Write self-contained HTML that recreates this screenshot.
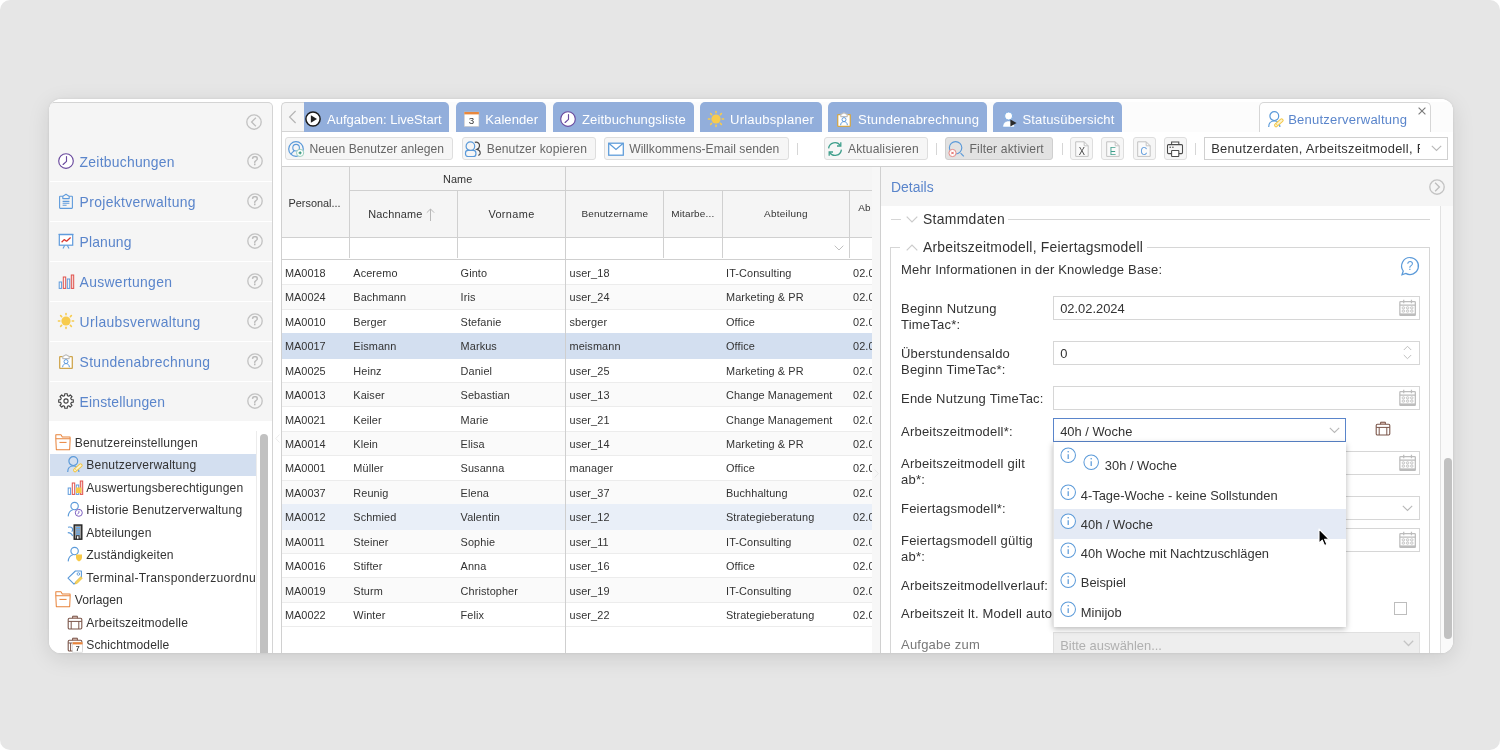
<!DOCTYPE html>
<html lang="de">
<head>
<meta charset="utf-8">
<title>Benutzerverwaltung</title>
<style>
*{box-sizing:border-box;margin:0;padding:0}
html,body{width:1500px;height:750px;overflow:hidden}
body{background:#fff;font-family:"Liberation Sans",Arial,sans-serif;color:#333;position:relative}
#bg{position:absolute;left:0;top:0;width:1500px;height:750px;border-radius:10px;background:#e6e6e6}
#shadow{position:absolute;left:49px;top:99px;width:1404px;height:554px;border-radius:12px;background:#fff;box-shadow:0 5px 22px rgba(0,0,0,.115),0 0 3px rgba(0,0,0,.08)}
#card{position:absolute;left:49px;top:99px;width:1404px;height:554px;border-radius:12px;background:#fff;overflow:hidden}
#pg{position:absolute;left:-49px;top:-99px;width:1500px;height:750px;will-change:transform}
#pg div,#pg span,#pg svg{position:absolute}
.t{white-space:nowrap;line-height:1}
svg{overflow:visible}
</style>
</head>
<body>
<div id="bg"></div>
<div id="shadow"></div>
<div id="card"><div id="pg">
<div style="left:49.00px;top:102.00px;width:224.00px;height:560.00px;background:#f5f5f5;border:1px solid #d4d4d4;border-left:none;border-radius:5px 5px 0 0"></div>
<svg style="left:246.00px;top:114.00px" width="16" height="16" viewBox="0 0 16 16" ><circle cx="8" cy="8" r="7.200" fill="none" stroke="#c3c3c3" stroke-width="1.350"/><path d="M9.900 3.700L5.600 8l4.300 4.300" fill="none" stroke="#bdbdbd" stroke-width="1.300"/></svg>
<svg style="left:57.70px;top:153.00px" width="16" height="16" viewBox="0 0 16 16" ><circle cx="8" cy="8" r="7.3" fill="#fff" stroke="#6a4a9e" stroke-width="1.15"/><path d="M8.5 3.6V8.3L5.1 11.5" fill="none" stroke="#6a4a9e" stroke-width="1.15" stroke-linecap="round" stroke-linejoin="round"/></svg>
<span class="t" style="left:79.60px;top:156.00px;font-size:13.9px;color:#5a85cb;letter-spacing:0.253px;">Zeitbuchungen</span>
<svg style="left:247.00px;top:153.00px" width="16" height="16" viewBox="0 0 16 16" ><circle cx="8" cy="8" r="7.200" fill="none" stroke="#c3c3c3" stroke-width="1.350"/><text x="8" y="12.300" font-family="Liberation Sans,sans-serif" font-size="12.200" text-anchor="middle" fill="#b6b6b6" stroke="#b6b6b6" stroke-width=".25">?</text></svg>
<div style="left:50.00px;top:181.00px;width:222.00px;height:1.00px;background:#fff"></div>
<svg style="left:57.70px;top:193.00px" width="16" height="16" viewBox="0 0 16 16" ><rect x="1.6" y="3.2" width="12.8" height="12.2" rx=".6" fill="none" stroke="#5f9bdc" stroke-width="1.1"/><path d="M4.8 5.6V3.4L8 1.2l3.2 2.2v2.2z" fill="#f5f5f5" stroke="#5f9bdc" stroke-width="1.1" stroke-linejoin="round"/><path d="M4.6 8.4h6.8M4.6 10.3h6.8M4.6 12.2h4" stroke="#5f9bdc" stroke-width="1.1"/></svg>
<span class="t" style="left:79.60px;top:196.00px;font-size:13.9px;color:#5a85cb;letter-spacing:0.345px;">Projektverwaltung</span>
<svg style="left:247.00px;top:193.00px" width="16" height="16" viewBox="0 0 16 16" ><circle cx="8" cy="8" r="7.200" fill="none" stroke="#c3c3c3" stroke-width="1.350"/><text x="8" y="12.300" font-family="Liberation Sans,sans-serif" font-size="12.200" text-anchor="middle" fill="#b6b6b6" stroke="#b6b6b6" stroke-width=".25">?</text></svg>
<div style="left:50.00px;top:221.00px;width:222.00px;height:1.00px;background:#fff"></div>
<svg style="left:57.70px;top:233.00px" width="16" height="16" viewBox="0 0 16 16" ><rect x="1.3" y="1.6" width="13.4" height="10.6" fill="#fff" stroke="#5f9bdc" stroke-width="1.2"/><path d="M.6 1.4h14.8" stroke="#5f9bdc" stroke-width="1.3"/><path d="M6.6 12.4l-1.6 3M9.4 12.4l1.6 3" stroke="#5f9bdc" stroke-width="1.1"/><path d="M3.6 9.2l2.6-2.6 2.4 1.6 4-3.6" fill="none" stroke="#d9342b" stroke-width="1.3" stroke-linejoin="round"/></svg>
<span class="t" style="left:79.60px;top:236.00px;font-size:13.9px;color:#5a85cb;letter-spacing:0.148px;">Planung</span>
<svg style="left:247.00px;top:233.00px" width="16" height="16" viewBox="0 0 16 16" ><circle cx="8" cy="8" r="7.200" fill="none" stroke="#c3c3c3" stroke-width="1.350"/><text x="8" y="12.300" font-family="Liberation Sans,sans-serif" font-size="12.200" text-anchor="middle" fill="#b6b6b6" stroke="#b6b6b6" stroke-width=".25">?</text></svg>
<div style="left:50.00px;top:261.00px;width:222.00px;height:1.00px;background:#fff"></div>
<svg style="left:57.70px;top:273.00px" width="16" height="16" viewBox="0 0 16 16" ><rect x="1.2" y="9" width="2.4" height="6.4" fill="none" stroke="#5f9bdc" stroke-width="1"/><rect x="5.3" y="4" width="2.4" height="11.4" fill="none" stroke="#e0524d" stroke-width="1"/><rect x="9.3" y="6" width="2.4" height="9.4" fill="none" stroke="#5f9bdc" stroke-width="1"/><rect x="13.3" y="2" width="2.4" height="13.4" fill="#f6d4d2" stroke="#e0524d" stroke-width="1"/></svg>
<span class="t" style="left:79.60px;top:276.00px;font-size:13.9px;color:#5a85cb;letter-spacing:0.321px;">Auswertungen</span>
<svg style="left:247.00px;top:273.00px" width="16" height="16" viewBox="0 0 16 16" ><circle cx="8" cy="8" r="7.200" fill="none" stroke="#c3c3c3" stroke-width="1.350"/><text x="8" y="12.300" font-family="Liberation Sans,sans-serif" font-size="12.200" text-anchor="middle" fill="#b6b6b6" stroke="#b6b6b6" stroke-width=".25">?</text></svg>
<div style="left:50.00px;top:301.00px;width:222.00px;height:1.00px;background:#fff"></div>
<svg style="left:57.70px;top:313.00px" width="16" height="16" viewBox="0 0 16 16" ><circle cx="8" cy="8" r="4.6" fill="#f7cb4d"/><path d="M14.20 8.00L15.60 8.00" stroke="#f7cb4d" stroke-width="1.5" stroke-linecap="round"/><path d="M12.38 12.38L13.37 13.37" stroke="#f7cb4d" stroke-width="1.5" stroke-linecap="round"/><path d="M8.00 14.20L8.00 15.60" stroke="#f7cb4d" stroke-width="1.5" stroke-linecap="round"/><path d="M3.62 12.38L2.63 13.37" stroke="#f7cb4d" stroke-width="1.5" stroke-linecap="round"/><path d="M1.80 8.00L0.40 8.00" stroke="#f7cb4d" stroke-width="1.5" stroke-linecap="round"/><path d="M3.62 3.62L2.63 2.63" stroke="#f7cb4d" stroke-width="1.5" stroke-linecap="round"/><path d="M8.00 1.80L8.00 0.40" stroke="#f7cb4d" stroke-width="1.5" stroke-linecap="round"/><path d="M12.38 3.62L13.37 2.63" stroke="#f7cb4d" stroke-width="1.5" stroke-linecap="round"/></svg>
<span class="t" style="left:79.60px;top:316.00px;font-size:13.9px;color:#5a85cb;letter-spacing:0.355px;">Urlaubsverwaltung</span>
<svg style="left:247.00px;top:313.00px" width="16" height="16" viewBox="0 0 16 16" ><circle cx="8" cy="8" r="7.200" fill="none" stroke="#c3c3c3" stroke-width="1.350"/><text x="8" y="12.300" font-family="Liberation Sans,sans-serif" font-size="12.200" text-anchor="middle" fill="#b6b6b6" stroke="#b6b6b6" stroke-width=".25">?</text></svg>
<div style="left:50.00px;top:341.00px;width:222.00px;height:1.00px;background:#fff"></div>
<svg style="left:57.70px;top:353.00px" width="16" height="16" viewBox="0 0 16 16" ><rect x="1.7" y="3.6" width="12.6" height="11.8" rx=".5" fill="#fff" stroke="#cfa64e" stroke-width="1.3"/><path d="M4.8 5.6V3.6L8 1.8l3.2 1.8v2z" fill="#fff" stroke="#bdbdbd" stroke-width="1.1" stroke-linejoin="round"/><circle cx="8" cy="8.6" r="2" fill="none" stroke="#5f9bdc" stroke-width="1"/><path d="M4.6 14.2c.2-2.4 1.6-3.6 3.4-3.6s3.2 1.2 3.4 3.6" fill="none" stroke="#5f9bdc" stroke-width="1"/></svg>
<span class="t" style="left:79.60px;top:356.00px;font-size:13.9px;color:#5a85cb;letter-spacing:0.324px;">Stundenabrechnung</span>
<svg style="left:247.00px;top:353.00px" width="16" height="16" viewBox="0 0 16 16" ><circle cx="8" cy="8" r="7.200" fill="none" stroke="#c3c3c3" stroke-width="1.350"/><text x="8" y="12.300" font-family="Liberation Sans,sans-serif" font-size="12.200" text-anchor="middle" fill="#b6b6b6" stroke="#b6b6b6" stroke-width=".25">?</text></svg>
<div style="left:50.00px;top:381.00px;width:222.00px;height:1.00px;background:#fff"></div>
<svg style="left:57.70px;top:393.00px" width="16" height="16" viewBox="0 0 16 16" ><path d="M6.75 0.71L9.25 0.71L9.41 2.68L10.76 3.24L12.27 1.96L14.04 3.73L12.76 5.24L13.32 6.59L15.29 6.75L15.29 9.25L13.32 9.41L12.76 10.76L14.04 12.27L12.27 14.04L10.76 12.76L9.41 13.32L9.25 15.29L6.75 15.29L6.59 13.32L5.24 12.76L3.73 14.04L1.96 12.27L3.24 10.76L2.68 9.41L0.71 9.25L0.71 6.75L2.68 6.59L3.24 5.24L1.96 3.73L3.73 1.96L5.24 3.24L6.59 2.68Z" fill="#fff" stroke="#444" stroke-width="1.15" stroke-linejoin="round"/><circle cx="8" cy="8" r="2.1" fill="#fff" stroke="#444" stroke-width="1.15"/></svg>
<span class="t" style="left:79.60px;top:396.00px;font-size:13.9px;color:#5a85cb;letter-spacing:0.162px;">Einstellungen</span>
<svg style="left:247.00px;top:393.00px" width="16" height="16" viewBox="0 0 16 16" ><circle cx="8" cy="8" r="7.200" fill="none" stroke="#c3c3c3" stroke-width="1.350"/><text x="8" y="12.300" font-family="Liberation Sans,sans-serif" font-size="12.200" text-anchor="middle" fill="#b6b6b6" stroke="#b6b6b6" stroke-width=".25">?</text></svg>
<div style="left:49.00px;top:421.00px;width:223.00px;height:240.00px;background:#fff"></div>
<div style="left:256.00px;top:431.00px;width:1.00px;height:230.00px;background:#ececec"></div>
<div style="left:260.30px;top:434.00px;width:7.40px;height:230.00px;background:#c1c1c1;border-radius:4px"></div>
<div style="left:50.00px;top:454.00px;width:206.00px;height:22.00px;background:#d3dff0"></div>
<div style="left:49px;top:425px;width:207px;height:240px;overflow:hidden">
<svg style="left:6.00px;top:8.80px" width="16.2" height="16.2" viewBox="0 0 16 16" ><path d="M.8 4.600V.8h5.100l1.300 2.100h7.700v1.700" fill="none" stroke="#e8833a" stroke-width="1" stroke-linejoin="round"/><path d="M.8 4.600h14.200l-.5 11H1.300z" fill="none" stroke="#e8833a" stroke-width="1" stroke-linejoin="round"/><path d="M4.400 8.300h7" stroke="#e8833a" stroke-width="1"/></svg>
<span class="t" style="left:25.70px;top:12.00px;font-size:12.1px;color:#333;letter-spacing:0.163px;">Benutzereinstellungen</span>
<svg style="left:17.90px;top:31.38px" width="16" height="16" viewBox="0 0 16 16" ><circle cx="6.300" cy="5.100" r="4.400" fill="none" stroke="#5b9ad9" stroke-width="1.200"/><path d="M.7 15.900c0-3.700 2.300-5.900 5.600-5.900s5.600 2.200 5.600 5.900" fill="none" stroke="#5b9ad9" stroke-width="1.200"/><g transform="translate(7 15.200) rotate(-41)"><rect x="0" y="-1.500" width="10.200" height="3" rx="1.300" fill="#fdf3cf" stroke="#f2c84b" stroke-width="1"/><path d="M2.400 -1.500v3" stroke="#f2c84b" stroke-width=".8"/></g></svg>
<span class="t" style="left:37.30px;top:34.00px;font-size:12.1px;color:#333;letter-spacing:0.174px;">Benutzerverwaltung</span>
<svg style="left:17.90px;top:53.86px" width="16" height="16" viewBox="0 0 16 16" ><rect x="1.2" y="9" width="2.4" height="6.4" fill="none" stroke="#5f9bdc" stroke-width="1"/><rect x="5.3" y="4" width="2.4" height="11.4" fill="none" stroke="#e0524d" stroke-width="1"/><rect x="9.3" y="6" width="2.4" height="9.4" fill="none" stroke="#5f9bdc" stroke-width="1"/><rect x="13.3" y="2" width="2.4" height="13.4" fill="#f6d4d2" stroke="#e0524d" stroke-width="1"/><rect x="9" y="8.5" width="5.5" height="5.5" fill="#f7c948"/></svg>
<span class="t" style="left:37.30px;top:57.00px;font-size:12.1px;color:#333;letter-spacing:0.151px;">Auswertungsberechtigungen</span>
<svg style="left:17.90px;top:76.34px" width="16" height="16" viewBox="0 0 16 16" ><circle cx="7.6" cy="5" r="3.7" fill="none" stroke="#5b9ad9" stroke-width="1.15"/><path d="M1.2 15.4c.3-3.6 2.2-5.9 4.6-6.6" fill="none" stroke="#5b9ad9" stroke-width="1.15"/><circle cx="11.8" cy="11.8" r="3.5" fill="#fff" stroke="#7d5fc0" stroke-width="1"/><path d="M11.9 9.8v2.2l-1.5 1" fill="none" stroke="#7d5fc0" stroke-width=".9"/></svg>
<span class="t" style="left:37.30px;top:79.00px;font-size:12.1px;color:#333;letter-spacing:0.176px;">Historie Benutzerverwaltung</span>
<svg style="left:17.90px;top:98.82px" width="16" height="16" viewBox="0 0 16 16" ><path d="M1 3.200c3.500-1 6 1.500 3.800 4.600M.8 8.600c2.500 0 4 1.200 4.800 3.400" fill="none" stroke="#5b9ad9" stroke-width="1.100"/><rect x="7.200" y="1" width="7.600" height="14.200" fill="#9c9c9c" stroke="#222" stroke-width="1.400"/><path d="M9 3.600h4M9 5.800h4M9 8h4M9 10.200h4" stroke="#5fb0ff" stroke-width="1"/><rect x="9.400" y="11.800" width="2.600" height="3.400" fill="#fff" stroke="#222" stroke-width=".9"/></svg>
<span class="t" style="left:37.30px;top:102.00px;font-size:12.1px;color:#333;letter-spacing:0.118px;">Abteilungen</span>
<svg style="left:17.90px;top:121.30px" width="16" height="16" viewBox="0 0 16 16" ><circle cx="7.6" cy="5" r="3.7" fill="none" stroke="#5b9ad9" stroke-width="1.15"/><path d="M1.2 15.4c.3-3.6 2.2-5.9 4.6-6.6" fill="none" stroke="#5b9ad9" stroke-width="1.15"/><path d="M9 8.6h6v3c0 2-1.4 3.2-3 3.8-1.600-.6-3-1.8-3-3.800z" fill="#f7c948"/></svg>
<span class="t" style="left:37.30px;top:124.00px;font-size:12.1px;color:#333;letter-spacing:0.127px;">Zuständigkeiten</span>
<svg style="left:17.90px;top:143.78px" width="16" height="16" viewBox="0 0 16 16" ><path d="M1 9.200L8.400 2h6v6L7 15.200z" fill="none" stroke="#5b9ad9" stroke-width="1.100" stroke-linejoin="round"/><circle cx="11.400" cy="5" r="1.300" fill="none" stroke="#5b9ad9" stroke-width=".9"/><path d="M8 15l.6-2.200 5.200-5.200 1.600 1.600-5.200 5.200z" fill="#f7d25a" stroke="#e9b93a" stroke-width=".5"/></svg>
<span class="t" style="left:37.30px;top:147.00px;font-size:12.1px;color:#333;letter-spacing:0.3px;">Terminal-Transponderzuordnung</span>
<svg style="left:6.00px;top:166.16px" width="16.2" height="16.2" viewBox="0 0 16 16" ><path d="M.8 4.600V.8h5.100l1.300 2.100h7.700v1.700" fill="none" stroke="#e8833a" stroke-width="1" stroke-linejoin="round"/><path d="M.8 4.600h14.200l-.5 11H1.300z" fill="none" stroke="#e8833a" stroke-width="1" stroke-linejoin="round"/><path d="M4.400 8.300h7" stroke="#e8833a" stroke-width="1"/></svg>
<span class="t" style="left:25.70px;top:169.00px;font-size:12.1px;color:#333;letter-spacing:0.047px;">Vorlagen</span>
<svg style="left:17.90px;top:188.74px" width="16" height="16" viewBox="0 0 16 16" ><rect x="1.200" y="4.200" width="13.600" height="10.800" rx="1.200" fill="none" stroke="#7b564a" stroke-width="1.100"/><path d="M5.600 4.200V2.200h4.800v2" fill="#c9aaa0" stroke="#7b564a" stroke-width="1"/><path d="M1.200 7.400h13.600M4.200 7.400V15M11.800 7.400V15" stroke="#7b564a" stroke-width="1"/></svg>
<span class="t" style="left:37.30px;top:192.00px;font-size:12.1px;color:#333;letter-spacing:0.167px;">Arbeitszeitmodelle</span>
<svg style="left:17.90px;top:211.22px" width="16" height="16" viewBox="0 0 16 16" ><rect x="1.200" y="4.200" width="13.600" height="10.800" rx="1.200" fill="none" stroke="#7b564a" stroke-width="1.100"/><path d="M5.600 4.200V2.200h4.800v2" fill="#c9aaa0" stroke="#7b564a" stroke-width="1"/><path d="M1.200 7h4M3.600 7V15" stroke="#7b564a" stroke-width="1"/><rect x="5.600" y="6.200" width="10" height="10" fill="#fff" stroke="#ccc" stroke-width=".6"/><rect x="5.600" y="6.200" width="10" height="2.200" fill="#e8833a"/><text x="10.600" y="15.200" font-family="Liberation Sans,sans-serif" font-size="7" font-weight="bold" text-anchor="middle" fill="#444">7</text></svg>
<span class="t" style="left:37.30px;top:214.00px;font-size:12.1px;color:#333;letter-spacing:0.065px;">Schichtmodelle</span>
</div>
<svg style="left:274.5px;top:434.3px" width="5" height="9" viewBox="0 0 5 9"><path d="M4.500 .5L.8 4.500l3.700 4" fill="none" stroke="#ececec" stroke-width="1"/></svg>
<div style="left:281.00px;top:102.00px;width:1180.00px;height:30.00px;background:#fcfcfc"></div>
<div style="left:281.00px;top:102.00px;width:23.00px;height:30.00px;background:#f5f5f5;border:1px solid #d4d4d4;border-right:none;border-radius:5px 0 0 0"></div>
<svg style="left:288px;top:110px" width="9" height="14" viewBox="0 0 9 14"><path d="M7.6 1L1.6 7l6 6" fill="none" stroke="#b5b5b5" stroke-width="1.200"/></svg>
<div style="left:303.70px;top:102.00px;width:145.30px;height:30.00px;background:#92aedb;border-radius:0 5px 0 0"></div>
<svg style="left:305.20px;top:111.00px" width="16" height="16" viewBox="0 0 16 16" ><circle cx="8" cy="8" r="7.100" fill="#fff" stroke="#1a1a1a" stroke-width="1.500"/><path d="M5.900 4.200l6.100 3.800-6.100 3.800z" fill="#222"/></svg>
<span class="t" style="left:327.00px;top:113.00px;font-size:13.05px;color:#fff;letter-spacing:0.004px;">Aufgaben: LiveStart</span>
<div style="left:455.80px;top:102.00px;width:90.40px;height:30.00px;background:#92aedb;border-radius:5px 5px 0 0"></div>
<svg style="left:463.80px;top:111.00px" width="16" height="16" viewBox="0 0 16 16" ><rect x=".3" y="1" width="14.600" height="14.400" fill="#fff" stroke="#cfc6bd" stroke-width=".5"/><rect x=".3" y="1" width="14.600" height="2.400" fill="#e8873c"/><text x="7.600" y="13" font-family="Liberation Sans,sans-serif" font-size="9.800" text-anchor="middle" fill="#333">3</text></svg>
<span class="t" style="left:485.30px;top:113.00px;font-size:13.05px;color:#fff;letter-spacing:0.066px;">Kalender</span>
<div style="left:552.80px;top:102.00px;width:140.90px;height:30.00px;background:#92aedb;border-radius:5px 5px 0 0"></div>
<svg style="left:560.00px;top:111.00px" width="16" height="16" viewBox="0 0 16 16" ><circle cx="8" cy="8" r="7.3" fill="#fff" stroke="#6a4a9e" stroke-width="1.15"/><path d="M8.5 3.6V8.3L5.1 11.5" fill="none" stroke="#6a4a9e" stroke-width="1.15" stroke-linecap="round" stroke-linejoin="round"/></svg>
<span class="t" style="left:582.00px;top:113.00px;font-size:13.05px;color:#fff;letter-spacing:0.14px;">Zeitbuchungsliste</span>
<div style="left:700.00px;top:102.00px;width:122.00px;height:30.00px;background:#92aedb;border-radius:5px 5px 0 0"></div>
<svg style="left:707.80px;top:111.00px" width="16" height="16" viewBox="0 0 16 16" ><circle cx="8" cy="8" r="4.6" fill="#f7cb4d"/><path d="M14.20 8.00L15.60 8.00" stroke="#f7cb4d" stroke-width="1.5" stroke-linecap="round"/><path d="M12.38 12.38L13.37 13.37" stroke="#f7cb4d" stroke-width="1.5" stroke-linecap="round"/><path d="M8.00 14.20L8.00 15.60" stroke="#f7cb4d" stroke-width="1.5" stroke-linecap="round"/><path d="M3.62 12.38L2.63 13.37" stroke="#f7cb4d" stroke-width="1.5" stroke-linecap="round"/><path d="M1.80 8.00L0.40 8.00" stroke="#f7cb4d" stroke-width="1.5" stroke-linecap="round"/><path d="M3.62 3.62L2.63 2.63" stroke="#f7cb4d" stroke-width="1.5" stroke-linecap="round"/><path d="M8.00 1.80L8.00 0.40" stroke="#f7cb4d" stroke-width="1.5" stroke-linecap="round"/><path d="M12.38 3.62L13.37 2.63" stroke="#f7cb4d" stroke-width="1.5" stroke-linecap="round"/></svg>
<span class="t" style="left:730.00px;top:113.00px;font-size:13.05px;color:#fff;letter-spacing:0.213px;">Urlaubsplaner</span>
<div style="left:828.30px;top:102.00px;width:158.40px;height:30.00px;background:#92aedb;border-radius:5px 5px 0 0"></div>
<svg style="left:836.00px;top:111.00px" width="16" height="16" viewBox="0 0 16 16" ><rect x="1.7" y="3.6" width="12.6" height="11.8" rx=".5" fill="#fff" stroke="#cfa64e" stroke-width="1.3"/><path d="M4.8 5.6V3.6L8 1.8l3.2 1.8v2z" fill="#fff" stroke="#bdbdbd" stroke-width="1.1" stroke-linejoin="round"/><circle cx="8" cy="8.6" r="2" fill="none" stroke="#5f9bdc" stroke-width="1"/><path d="M4.6 14.2c.2-2.4 1.6-3.6 3.4-3.6s3.2 1.2 3.4 3.6" fill="none" stroke="#5f9bdc" stroke-width="1"/></svg>
<span class="t" style="left:858.00px;top:113.00px;font-size:13.05px;color:#fff;letter-spacing:0.222px;">Stundenabrechnung</span>
<div style="left:992.80px;top:102.00px;width:129.40px;height:30.00px;background:#92aedb;border-radius:5px 5px 0 0"></div>
<svg style="left:1001.60px;top:111.00px" width="16" height="16" viewBox="0 0 16 16" ><circle cx="6.600" cy="5" r="4" fill="#fff" stroke="#6fa3de" stroke-width=".8"/><path d="M.8 16c.2-4 2.600-6 5.800-6s5.600 2 5.800 6z" fill="#fff" stroke="#7aa9e2" stroke-width=".5"/><path d="M8.400 8.600l6.200 3.500-6.200 3.500z" fill="#2a2a2a"/></svg>
<span class="t" style="left:1022.40px;top:113.00px;font-size:13.05px;color:#fff;letter-spacing:0.147px;">Statusübersicht</span>
<div style="left:1259.00px;top:102.00px;width:171.50px;height:31.00px;background:#fff;border:1px solid #d6d6d6;border-bottom:none;border-radius:5px 5px 0 0"></div>
<svg style="left:1267.60px;top:111.00px" width="16" height="16" viewBox="0 0 16 16" ><circle cx="6.300" cy="5.100" r="4.400" fill="none" stroke="#5b9ad9" stroke-width="1.200"/><path d="M.7 15.900c0-3.700 2.300-5.900 5.600-5.900s5.600 2.200 5.600 5.900" fill="none" stroke="#5b9ad9" stroke-width="1.200"/><g transform="translate(7 15.200) rotate(-41)"><rect x="0" y="-1.500" width="10.200" height="3" rx="1.300" fill="#fdf3cf" stroke="#f2c84b" stroke-width="1"/><path d="M2.400 -1.500v3" stroke="#f2c84b" stroke-width=".8"/></g></svg>
<span class="t" style="left:1288.20px;top:113.00px;font-size:13.05px;color:#5a85cb;letter-spacing:0.203px;">Benutzerverwaltung</span>
<svg style="left:1417.5px;top:106.5px" width="8" height="8" viewBox="0 0 8 8"><path d="M.6.6l6.800 6.800M7.400.6L.6 7.400" stroke="#7c7c7c" stroke-width="1.150"/></svg>
<div style="left:282.00px;top:132.00px;width:1180.00px;height:34.00px;background:#fff"></div>
<div style="left:282.00px;top:166.00px;width:1180.00px;height:1.00px;background:#d0d0d0"></div>
<div style="left:281.00px;top:110.00px;width:1.00px;height:560.00px;background:#d4d4d4"></div>
<div style="left:285.00px;top:137.00px;width:167.50px;height:23.00px;background:#f6f6f6;border:1px solid #dedede;border-radius:3px"></div>
<svg style="left:288.30px;top:140.50px" width="16" height="16" viewBox="0 0 16 16" ><circle cx="8" cy="8" r="7.300" fill="none" stroke="#5b9ad9" stroke-width="1.200"/><circle cx="8.100" cy="6.700" r="3.300" fill="none" stroke="#5b9ad9" stroke-width="1.100"/><path d="M3.200 13.200c.5-1.600 1.600-2.700 3-3.300" fill="none" stroke="#5b9ad9" stroke-width="1.100"/><circle cx="12.100" cy="11.900" r="3.600" fill="#fff" stroke="#8fcab6" stroke-width=".9"/><path d="M12.100 9.700l.7 1.500 1.500.7-1.500.7-.7 1.500-.7-1.500-1.500-.7 1.500-.7z" fill="#2f9479"/></svg>
<span class="t" style="left:309.50px;top:143.00px;font-size:12.1px;color:#666;letter-spacing:0.03px;">Neuen Benutzer anlegen</span>
<div style="left:462.00px;top:137.00px;width:133.80px;height:23.00px;background:#f6f6f6;border:1px solid #dedede;border-radius:3px"></div>
<svg style="left:465.30px;top:140.50px" width="16" height="16" viewBox="0 0 16 16" ><path d="M9.8 1.300c3-.7 5 1.200 4.700 3.800-.2 1.700-1.200 2.800-2.600 3.300 2 .6 3.500 1.900 3.300 4.100-.1 1-.8 1.600-1.900 1.800" fill="none" stroke="#4a4a4a" stroke-width="1.200"/><circle cx="5.400" cy="5.200" r="4.300" fill="#f6f6f6" stroke="#5b9ad9" stroke-width="1.200"/><rect x=".5" y="9.300" width="10.400" height="6.200" rx="2.600" fill="#f6f6f6" stroke="#5b9ad9" stroke-width="1.200"/></svg>
<span class="t" style="left:486.70px;top:143.00px;font-size:12.1px;color:#666;letter-spacing:0.131px;">Benutzer kopieren</span>
<div style="left:604.00px;top:137.00px;width:184.70px;height:23.00px;background:#f6f6f6;border:1px solid #dedede;border-radius:3px"></div>
<svg style="left:607.30px;top:140.50px" width="16" height="16" viewBox="0 0 16 16" ><rect x="1.700" y="2.200" width="14.600" height="12" fill="#fff" stroke="#5b9ad9" stroke-width="1.250"/><path d="M2.100 2.600l6.900 5.800 6.900-5.800" fill="none" stroke="#5b9ad9" stroke-width="1.250"/></svg>
<span class="t" style="left:629.20px;top:143.00px;font-size:12.1px;color:#666;letter-spacing:0.036px;">Willkommens-Email senden</span>
<div style="left:797.00px;top:143.00px;width:1.00px;height:12.00px;background:#d6d6d6"></div>
<div style="left:824.00px;top:137.00px;width:103.50px;height:23.00px;background:#f6f6f6;border:1px solid #dedede;border-radius:3px"></div>
<svg style="left:827.30px;top:140.50px" width="16" height="16" viewBox="0 0 16 16" ><path d="M1.600 7.400A6.400 6.400 0 0 1 13.400 4.600" fill="none" stroke="#3f9f8c" stroke-width="1.300"/><path d="M13.800 1.200v3.800H10" fill="none" stroke="#3f9f8c" stroke-width="1.300"/><path d="M14.400 8.600A6.400 6.400 0 0 1 2.600 11.400" fill="none" stroke="#3f9f8c" stroke-width="1.300"/><path d="M2.200 14.800V11H6" fill="none" stroke="#3f9f8c" stroke-width="1.300"/></svg>
<span class="t" style="left:848.00px;top:143.00px;font-size:12.1px;color:#666;letter-spacing:0.119px;">Aktualisieren</span>
<div style="left:936.00px;top:143.00px;width:1.00px;height:12.00px;background:#d6d6d6"></div>
<div style="left:945.00px;top:137.00px;width:107.80px;height:23.00px;background:#e2e2e2;border:1px solid #cfcfcf;border-radius:3px"></div>
<svg style="left:948.30px;top:140.50px" width="16" height="16" viewBox="0 0 16 16" ><circle cx="7.600" cy="6.800" r="6.200" fill="none" stroke="#5b9ad9" stroke-width="1.150"/><path d="M12.600 12.200l3.200 3.200" stroke="#5b9ad9" stroke-width="1.200"/><circle cx="4.500" cy="12" r="3.600" fill="#fff" stroke="#e58a86" stroke-width="1"/><path d="M3.300 10.800l2.400 2.400M5.700 10.800l-2.400 2.400" stroke="#dd4b45" stroke-width=".9"/></svg>
<span class="t" style="left:969.50px;top:143.00px;font-size:12.1px;color:#666;letter-spacing:0.151px;">Filter aktiviert</span>
<div style="left:1061.50px;top:143.00px;width:1.00px;height:12.00px;background:#d6d6d6"></div>
<div style="left:1070.00px;top:137.00px;width:23.00px;height:23.00px;background:#f6f6f6;border:1px solid #dedede;border-radius:3px"></div>
<svg style="left:1073.60px;top:140.50px" width="16" height="16" viewBox="0 0 16 16" ><path d="M1.700 .8h8.500l4 4v10.600H1.700z" fill="#fafafa" stroke="#c2c2c2" stroke-width="1"/><path d="M10.200 .8v4h4" fill="none" stroke="#c2c2c2" stroke-width="1"/><text transform="translate(7.900 13.500) scale(.92 1)" font-family="Liberation Sans,sans-serif" font-size="10.200" text-anchor="middle" fill="#444">X</text></svg>
<div style="left:1101.30px;top:137.00px;width:23.00px;height:23.00px;background:#f6f6f6;border:1px solid #dedede;border-radius:3px"></div>
<svg style="left:1104.90px;top:140.50px" width="16" height="16" viewBox="0 0 16 16" ><path d="M1.700 .8h8.500l4 4v10.600H1.700z" fill="#fafafa" stroke="#c2c2c2" stroke-width="1"/><path d="M10.200 .8v4h4" fill="none" stroke="#c2c2c2" stroke-width="1"/><text transform="translate(7.900 13.500) scale(.92 1)" font-family="Liberation Sans,sans-serif" font-size="10.200" text-anchor="middle" fill="#3f9f8c">E</text></svg>
<div style="left:1132.50px;top:137.00px;width:23.00px;height:23.00px;background:#f6f6f6;border:1px solid #dedede;border-radius:3px"></div>
<svg style="left:1136.10px;top:140.50px" width="16" height="16" viewBox="0 0 16 16" ><path d="M1.700 .8h8.500l4 4v10.600H1.700z" fill="#fafafa" stroke="#c2c2c2" stroke-width="1"/><path d="M10.200 .8v4h4" fill="none" stroke="#c2c2c2" stroke-width="1"/><text transform="translate(7.900 13.500) scale(.92 1)" font-family="Liberation Sans,sans-serif" font-size="10.200" text-anchor="middle" fill="#5f9bdc">C</text></svg>
<div style="left:1163.80px;top:137.00px;width:23.00px;height:23.00px;background:#f6f6f6;border:1px solid #dedede;border-radius:3px"></div>
<svg style="left:1167.40px;top:140.50px" width="16" height="16" viewBox="0 0 16 16" ><path d="M4.600 3.600V.9h7.200v2.700" fill="#fff" stroke="#4a4a4a" stroke-width="1.050"/><rect x=".5" y="3.600" width="15" height="9" rx="1" fill="none" stroke="#4a4a4a" stroke-width="1.050"/><rect x="4.600" y="9.400" width="7.200" height="6" rx=".5" fill="#fff" stroke="#4a4a4a" stroke-width="1.050"/><circle cx="3.200" cy="6.200" r=".8" fill="#4a4a4a"/><circle cx="5.900" cy="6.200" r=".8" fill="#4a4a4a"/></svg>
<div style="left:1195.30px;top:143.00px;width:1.00px;height:12.00px;background:#d6d6d6"></div>
<div style="left:1204.00px;top:136.60px;width:244.00px;height:23.00px;background:#fff;border:1px solid #d0d0d0"></div>
<div style="left:1205px;top:138px;width:215px;height:20px;overflow:hidden">
<span class="t" style="left:6.20px;top:5.00px;font-size:12.9px;color:#333;letter-spacing:0.29px;">Benutzerdaten, Arbeitszeitmodell, Feiertagsmodell</span>
</div>
<svg style="left:1431px;top:145px" width="11" height="7" viewBox="0 0 11 7"><path d="M.8.8l4.700 4.700L10.200.8" fill="none" stroke="#b8b8b8" stroke-width="1.100"/></svg>
<div style="left:281.00px;top:167.00px;width:590.60px;height:500.00px;background:#fff;border-left:1px solid #d0d0d0"></div>
<div style="left:282.00px;top:167.00px;width:589.60px;height:70.50px;background:#f5f5f5"></div>
<div style="left:349.50px;top:189.50px;width:522.10px;height:1.00px;background:#d0d0d0"></div>
<div style="left:282.00px;top:237.30px;width:589.60px;height:1.00px;background:#d0d0d0"></div>
<div style="left:282.00px;top:259.00px;width:589.60px;height:1.00px;background:#cfcfcf"></div>
<div style="left:349.30px;top:167.00px;width:1.00px;height:91.00px;background:#d0d0d0"></div>
<div style="left:457.20px;top:190.00px;width:1.00px;height:68.00px;background:#d0d0d0"></div>
<div style="left:663.30px;top:190.00px;width:1.00px;height:68.00px;background:#d0d0d0"></div>
<div style="left:722.30px;top:190.00px;width:1.00px;height:68.00px;background:#d0d0d0"></div>
<div style="left:848.80px;top:190.00px;width:1.00px;height:68.00px;background:#d0d0d0"></div>
<span class="t" style="left:288.60px;top:198.00px;font-size:10.9px;color:#333;letter-spacing:-0.021px;">Personal...</span>
<span class="t" style="left:442.90px;top:174.00px;font-size:10.9px;color:#333;letter-spacing:0.141px;">Name</span>
<span class="t" style="left:368.30px;top:209.00px;font-size:10.9px;color:#333;letter-spacing:0.184px;">Nachname</span>
<svg style="left:426.1px;top:207.5px" width="9" height="13.5" viewBox="0 0 9 13.5"><path d="M4.500 13V1M.8 4.700L4.500 1l3.700 3.700" fill="none" stroke="#b8b8b8" stroke-width="1"/></svg>
<span class="t" style="left:488.40px;top:209.00px;font-size:10.9px;color:#333;letter-spacing:0.379px;">Vorname</span>
<span class="t" style="left:581.50px;top:209.00px;font-size:9.95px;color:#333;letter-spacing:0.162px;">Benutzername</span>
<span class="t" style="left:671.20px;top:209.00px;font-size:9.95px;color:#333;letter-spacing:0.17px;">Mitarbe...</span>
<span class="t" style="left:764.10px;top:209.00px;font-size:9.95px;color:#333;letter-spacing:0.264px;">Abteilung</span>
<div style="left:850px;top:195px;width:21.3px;height:30px;overflow:hidden">
<span class="t" style="left:8.20px;top:8.00px;font-size:9.95px;color:#333;letter-spacing:0.3px;">Abteilung gültig ab</span>
</div>
<svg style="left:833.5px;top:245px" width="10" height="6" viewBox="0 0 10 6"><path d="M.7.7l4.300 4.300L9.300.7" fill="none" stroke="#c0c0c0" stroke-width="1"/></svg>
<div style="left:282px;top:0;width:589.60px;height:750px;overflow:hidden">
<div style="left:0.00px;top:260.70px;width:600.00px;height:24.43px;background:#fff;border-bottom:1px solid #ececec"></div>
<div style="left:0.00px;top:285.13px;width:600.00px;height:24.43px;background:#fafafa;border-bottom:1px solid #ececec"></div>
<div style="left:0.00px;top:309.56px;width:600.00px;height:24.43px;background:#fff;border-bottom:1px solid #ececec"></div>
<div style="left:0.00px;top:358.42px;width:600.00px;height:24.43px;background:#fff;border-bottom:1px solid #ececec"></div>
<div style="left:0.00px;top:382.85px;width:600.00px;height:24.43px;background:#fafafa;border-bottom:1px solid #ececec"></div>
<div style="left:0.00px;top:407.28px;width:600.00px;height:24.43px;background:#fff;border-bottom:1px solid #ececec"></div>
<div style="left:0.00px;top:431.71px;width:600.00px;height:24.43px;background:#fafafa;border-bottom:1px solid #ececec"></div>
<div style="left:0.00px;top:456.14px;width:600.00px;height:24.43px;background:#fff;border-bottom:1px solid #ececec"></div>
<div style="left:0.00px;top:480.57px;width:600.00px;height:24.43px;background:#fafafa;border-bottom:1px solid #ececec"></div>
<div style="left:0.00px;top:529.43px;width:600.00px;height:24.43px;background:#fafafa;border-bottom:1px solid #ececec"></div>
<div style="left:0.00px;top:553.86px;width:600.00px;height:24.43px;background:#fff;border-bottom:1px solid #ececec"></div>
<div style="left:0.00px;top:578.29px;width:600.00px;height:24.43px;background:#fafafa;border-bottom:1px solid #ececec"></div>
<div style="left:0.00px;top:602.72px;width:600.00px;height:24.43px;background:#fff;border-bottom:1px solid #ececec"></div>
<div style="left:0px;top:504.20px;width:600px;height:25.83px;background:#e9eff8"></div>
<div style="left:0px;top:333.19px;width:600px;height:25.83px;background:#d3dff0"></div>
<span class="t" style="left:3.00px;top:268.00px;font-size:10.9px;color:#333;">MA0018</span>
<span class="t" style="left:71.30px;top:268.00px;font-size:10.9px;color:#333;letter-spacing:0.1px;">Aceremo</span>
<span class="t" style="left:178.60px;top:268.00px;font-size:10.9px;color:#333;letter-spacing:0.1px;">Ginto</span>
<span class="t" style="left:287.50px;top:268.00px;font-size:10.9px;color:#333;letter-spacing:0.1px;">user_18</span>
<span class="t" style="left:444.00px;top:268.00px;font-size:10.9px;color:#333;letter-spacing:0.1px;">IT-Consulting</span>
<span class="t" style="left:571.00px;top:268.00px;font-size:10.9px;color:#333;letter-spacing:0.1px;">02.02.2024</span>
<span class="t" style="left:3.00px;top:292.00px;font-size:10.9px;color:#333;">MA0024</span>
<span class="t" style="left:71.30px;top:292.00px;font-size:10.9px;color:#333;letter-spacing:0.1px;">Bachmann</span>
<span class="t" style="left:178.60px;top:292.00px;font-size:10.9px;color:#333;letter-spacing:0.1px;">Iris</span>
<span class="t" style="left:287.50px;top:292.00px;font-size:10.9px;color:#333;letter-spacing:0.1px;">user_24</span>
<span class="t" style="left:444.00px;top:292.00px;font-size:10.9px;color:#333;letter-spacing:0.1px;">Marketing &amp; PR</span>
<span class="t" style="left:571.00px;top:292.00px;font-size:10.9px;color:#333;letter-spacing:0.1px;">02.02.2024</span>
<span class="t" style="left:3.00px;top:317.00px;font-size:10.9px;color:#333;">MA0010</span>
<span class="t" style="left:71.30px;top:317.00px;font-size:10.9px;color:#333;letter-spacing:0.1px;">Berger</span>
<span class="t" style="left:178.60px;top:317.00px;font-size:10.9px;color:#333;letter-spacing:0.1px;">Stefanie</span>
<span class="t" style="left:287.50px;top:317.00px;font-size:10.9px;color:#333;letter-spacing:0.1px;">sberger</span>
<span class="t" style="left:444.00px;top:317.00px;font-size:10.9px;color:#333;letter-spacing:0.1px;">Office</span>
<span class="t" style="left:571.00px;top:317.00px;font-size:10.9px;color:#333;letter-spacing:0.1px;">02.02.2024</span>
<span class="t" style="left:3.00px;top:341.00px;font-size:10.9px;color:#333;">MA0017</span>
<span class="t" style="left:71.30px;top:341.00px;font-size:10.9px;color:#333;letter-spacing:0.1px;">Eismann</span>
<span class="t" style="left:178.60px;top:341.00px;font-size:10.9px;color:#333;letter-spacing:0.1px;">Markus</span>
<span class="t" style="left:287.50px;top:341.00px;font-size:10.9px;color:#333;letter-spacing:0.1px;">meismann</span>
<span class="t" style="left:444.00px;top:341.00px;font-size:10.9px;color:#333;letter-spacing:0.1px;">Office</span>
<span class="t" style="left:571.00px;top:341.00px;font-size:10.9px;color:#333;letter-spacing:0.1px;">02.02.2024</span>
<span class="t" style="left:3.00px;top:366.00px;font-size:10.9px;color:#333;">MA0025</span>
<span class="t" style="left:71.30px;top:366.00px;font-size:10.9px;color:#333;letter-spacing:0.1px;">Heinz</span>
<span class="t" style="left:178.60px;top:366.00px;font-size:10.9px;color:#333;letter-spacing:0.1px;">Daniel</span>
<span class="t" style="left:287.50px;top:366.00px;font-size:10.9px;color:#333;letter-spacing:0.1px;">user_25</span>
<span class="t" style="left:444.00px;top:366.00px;font-size:10.9px;color:#333;letter-spacing:0.1px;">Marketing &amp; PR</span>
<span class="t" style="left:571.00px;top:366.00px;font-size:10.9px;color:#333;letter-spacing:0.1px;">02.02.2024</span>
<span class="t" style="left:3.00px;top:390.00px;font-size:10.9px;color:#333;">MA0013</span>
<span class="t" style="left:71.30px;top:390.00px;font-size:10.9px;color:#333;letter-spacing:0.1px;">Kaiser</span>
<span class="t" style="left:178.60px;top:390.00px;font-size:10.9px;color:#333;letter-spacing:0.1px;">Sebastian</span>
<span class="t" style="left:287.50px;top:390.00px;font-size:10.9px;color:#333;letter-spacing:0.1px;">user_13</span>
<span class="t" style="left:444.00px;top:390.00px;font-size:10.9px;color:#333;letter-spacing:0.1px;">Change Management</span>
<span class="t" style="left:571.00px;top:390.00px;font-size:10.9px;color:#333;letter-spacing:0.1px;">02.02.2024</span>
<span class="t" style="left:3.00px;top:415.00px;font-size:10.9px;color:#333;">MA0021</span>
<span class="t" style="left:71.30px;top:415.00px;font-size:10.9px;color:#333;letter-spacing:0.1px;">Keiler</span>
<span class="t" style="left:178.60px;top:415.00px;font-size:10.9px;color:#333;letter-spacing:0.1px;">Marie</span>
<span class="t" style="left:287.50px;top:415.00px;font-size:10.9px;color:#333;letter-spacing:0.1px;">user_21</span>
<span class="t" style="left:444.00px;top:415.00px;font-size:10.9px;color:#333;letter-spacing:0.1px;">Change Management</span>
<span class="t" style="left:571.00px;top:415.00px;font-size:10.9px;color:#333;letter-spacing:0.1px;">02.02.2024</span>
<span class="t" style="left:3.00px;top:439.00px;font-size:10.9px;color:#333;">MA0014</span>
<span class="t" style="left:71.30px;top:439.00px;font-size:10.9px;color:#333;letter-spacing:0.1px;">Klein</span>
<span class="t" style="left:178.60px;top:439.00px;font-size:10.9px;color:#333;letter-spacing:0.1px;">Elisa</span>
<span class="t" style="left:287.50px;top:439.00px;font-size:10.9px;color:#333;letter-spacing:0.1px;">user_14</span>
<span class="t" style="left:444.00px;top:439.00px;font-size:10.9px;color:#333;letter-spacing:0.1px;">Marketing &amp; PR</span>
<span class="t" style="left:571.00px;top:439.00px;font-size:10.9px;color:#333;letter-spacing:0.1px;">02.02.2024</span>
<span class="t" style="left:3.00px;top:463.00px;font-size:10.9px;color:#333;">MA0001</span>
<span class="t" style="left:71.30px;top:463.00px;font-size:10.9px;color:#333;letter-spacing:0.1px;">Müller</span>
<span class="t" style="left:178.60px;top:463.00px;font-size:10.9px;color:#333;letter-spacing:0.1px;">Susanna</span>
<span class="t" style="left:287.50px;top:463.00px;font-size:10.9px;color:#333;letter-spacing:0.1px;">manager</span>
<span class="t" style="left:444.00px;top:463.00px;font-size:10.9px;color:#333;letter-spacing:0.1px;">Office</span>
<span class="t" style="left:571.00px;top:463.00px;font-size:10.9px;color:#333;letter-spacing:0.1px;">02.02.2024</span>
<span class="t" style="left:3.00px;top:488.00px;font-size:10.9px;color:#333;">MA0037</span>
<span class="t" style="left:71.30px;top:488.00px;font-size:10.9px;color:#333;letter-spacing:0.1px;">Reunig</span>
<span class="t" style="left:178.60px;top:488.00px;font-size:10.9px;color:#333;letter-spacing:0.1px;">Elena</span>
<span class="t" style="left:287.50px;top:488.00px;font-size:10.9px;color:#333;letter-spacing:0.1px;">user_37</span>
<span class="t" style="left:444.00px;top:488.00px;font-size:10.9px;color:#333;letter-spacing:0.1px;">Buchhaltung</span>
<span class="t" style="left:571.00px;top:488.00px;font-size:10.9px;color:#333;letter-spacing:0.1px;">02.02.2024</span>
<span class="t" style="left:3.00px;top:512.00px;font-size:10.9px;color:#333;">MA0012</span>
<span class="t" style="left:71.30px;top:512.00px;font-size:10.9px;color:#333;letter-spacing:0.1px;">Schmied</span>
<span class="t" style="left:178.60px;top:512.00px;font-size:10.9px;color:#333;letter-spacing:0.1px;">Valentin</span>
<span class="t" style="left:287.50px;top:512.00px;font-size:10.9px;color:#333;letter-spacing:0.1px;">user_12</span>
<span class="t" style="left:444.00px;top:512.00px;font-size:10.9px;color:#333;letter-spacing:0.1px;">Strategieberatung</span>
<span class="t" style="left:571.00px;top:512.00px;font-size:10.9px;color:#333;letter-spacing:0.1px;">02.02.2024</span>
<span class="t" style="left:3.00px;top:537.00px;font-size:10.9px;color:#333;">MA0011</span>
<span class="t" style="left:71.30px;top:537.00px;font-size:10.9px;color:#333;letter-spacing:0.1px;">Steiner</span>
<span class="t" style="left:178.60px;top:537.00px;font-size:10.9px;color:#333;letter-spacing:0.1px;">Sophie</span>
<span class="t" style="left:287.50px;top:537.00px;font-size:10.9px;color:#333;letter-spacing:0.1px;">user_11</span>
<span class="t" style="left:444.00px;top:537.00px;font-size:10.9px;color:#333;letter-spacing:0.1px;">IT-Consulting</span>
<span class="t" style="left:571.00px;top:537.00px;font-size:10.9px;color:#333;letter-spacing:0.1px;">02.02.2024</span>
<span class="t" style="left:3.00px;top:561.00px;font-size:10.9px;color:#333;">MA0016</span>
<span class="t" style="left:71.30px;top:561.00px;font-size:10.9px;color:#333;letter-spacing:0.1px;">Stifter</span>
<span class="t" style="left:178.60px;top:561.00px;font-size:10.9px;color:#333;letter-spacing:0.1px;">Anna</span>
<span class="t" style="left:287.50px;top:561.00px;font-size:10.9px;color:#333;letter-spacing:0.1px;">user_16</span>
<span class="t" style="left:444.00px;top:561.00px;font-size:10.9px;color:#333;letter-spacing:0.1px;">Office</span>
<span class="t" style="left:571.00px;top:561.00px;font-size:10.9px;color:#333;letter-spacing:0.1px;">02.02.2024</span>
<span class="t" style="left:3.00px;top:586.00px;font-size:10.9px;color:#333;">MA0019</span>
<span class="t" style="left:71.30px;top:586.00px;font-size:10.9px;color:#333;letter-spacing:0.1px;">Sturm</span>
<span class="t" style="left:178.60px;top:586.00px;font-size:10.9px;color:#333;letter-spacing:0.1px;">Christopher</span>
<span class="t" style="left:287.50px;top:586.00px;font-size:10.9px;color:#333;letter-spacing:0.1px;">user_19</span>
<span class="t" style="left:444.00px;top:586.00px;font-size:10.9px;color:#333;letter-spacing:0.1px;">IT-Consulting</span>
<span class="t" style="left:571.00px;top:586.00px;font-size:10.9px;color:#333;letter-spacing:0.1px;">02.02.2024</span>
<span class="t" style="left:3.00px;top:610.00px;font-size:10.9px;color:#333;">MA0022</span>
<span class="t" style="left:71.30px;top:610.00px;font-size:10.9px;color:#333;letter-spacing:0.1px;">Winter</span>
<span class="t" style="left:178.60px;top:610.00px;font-size:10.9px;color:#333;letter-spacing:0.1px;">Felix</span>
<span class="t" style="left:287.50px;top:610.00px;font-size:10.9px;color:#333;letter-spacing:0.1px;">user_22</span>
<span class="t" style="left:444.00px;top:610.00px;font-size:10.9px;color:#333;letter-spacing:0.1px;">Strategieberatung</span>
<span class="t" style="left:571.00px;top:610.00px;font-size:10.9px;color:#333;letter-spacing:0.1px;">02.02.2024</span>
</div>
<div style="left:565.00px;top:167.00px;width:1.00px;height:500.00px;background:#cfcfcf"></div>
<div style="left:871.60px;top:167.00px;width:8.90px;height:500.00px;background:#f7f7f7"></div>
<svg style="left:873.5px;top:468.5px" width="5" height="9" viewBox="0 0 5 9"><path d="M.6 .5l3.700 4-3.700 4" fill="none" stroke="#e8e8e8" stroke-width="1"/></svg>
<div style="left:880.00px;top:166.00px;width:580.00px;height:500.00px;background:#fff;border-left:1px solid #d0d0d0;border-top:1px solid #d0d0d0"></div>
<div style="left:881.00px;top:167.00px;width:580.00px;height:39.00px;background:#f5f5f5"></div>
<span class="t" style="left:891.00px;top:181.00px;font-size:13.95px;color:#5a85cb;">Details</span>
<svg style="left:1429.00px;top:178.70px" width="16" height="16" viewBox="0 0 16 16" ><circle cx="8" cy="8" r="7.200" fill="none" stroke="#c3c3c3" stroke-width="1.350"/><path d="M6.100 3.700L10.400 8l-4.300 4.300" fill="none" stroke="#bdbdbd" stroke-width="1.300"/></svg>
<div style="left:1440.00px;top:206.00px;width:20.00px;height:460.00px;background:#fafafa;border-left:1px solid #e2e2e2"></div>
<div style="left:1444.30px;top:458.00px;width:7.50px;height:180.50px;background:#c1c1c1;border-radius:4px"></div>
<div style="left:891.00px;top:218.60px;width:9.50px;height:1.00px;background:#d6d6d6"></div>
<div style="left:1008.00px;top:218.60px;width:421.50px;height:1.00px;background:#d6d6d6"></div>
<svg style="left:905.5px;top:215.5px" width="12" height="7" viewBox="0 0 12 7"><path d="M.7.7l5.300 5.300L11.300.7" fill="none" stroke="#cbcbcb" stroke-width="1.200"/></svg>
<span class="t" style="left:923.00px;top:213.00px;font-size:13.9px;color:#333;letter-spacing:0.322px;">Stammdaten</span>
<div style="left:890.00px;top:247.00px;width:540.00px;height:430.00px;border:1px solid #d6d6d6;border-bottom:none"></div>
<div style="left:900.00px;top:245.00px;width:247.00px;height:5.00px;background:#fff"></div>
<svg style="left:905.5px;top:243.5px" width="12" height="7" viewBox="0 0 12 7"><path d="M.7 6.300L6 1l5.300 5.300" fill="none" stroke="#cbcbcb" stroke-width="1.200"/></svg>
<span class="t" style="left:923.00px;top:241.00px;font-size:13.9px;color:#333;letter-spacing:0.229px;">Arbeitszeitmodell, Feiertagsmodell</span>
<span class="t" style="left:901.00px;top:263.00px;font-size:13px;color:#333;letter-spacing:0.184px;">Mehr Informationen in der Knowledge Base:</span>
<svg style="left:1399.50px;top:255.50px" width="20" height="20" viewBox="0 0 16 16" ><path d="M8 1.200a6.800 6.800 0 1 1-3.400 12.700L1.600 15l1-3A6.800 6.800 0 0 1 8 1.200z" fill="#fff" stroke="#5b9ad9" stroke-width="1"/><text x="8" y="11.400" font-family="Liberation Sans,sans-serif" font-size="9.500" text-anchor="middle" fill="#5b9ad9">?</text></svg>
<div style="left:895px;top:290px;width:157px;height:380px;overflow:hidden">
<span class="t" style="left:6.00px;top:12.00px;font-size:13px;color:#333;letter-spacing:0.22px;">Beginn Nutzung</span>
<span class="t" style="left:6.00px;top:28.00px;font-size:13px;color:#333;letter-spacing:0.22px;">TimeTac*:</span>
<span class="t" style="left:6.00px;top:57.00px;font-size:13px;color:#333;letter-spacing:0.22px;">Überstundensaldo</span>
<span class="t" style="left:6.00px;top:73.00px;font-size:13px;color:#333;letter-spacing:0.22px;">Beginn TimeTac*:</span>
<span class="t" style="left:6.00px;top:102.00px;font-size:13px;color:#333;letter-spacing:0.22px;">Ende Nutzung TimeTac:</span>
<span class="t" style="left:6.00px;top:135.00px;font-size:13px;color:#333;letter-spacing:0.22px;">Arbeitszeitmodell*:</span>
<span class="t" style="left:6.00px;top:167.00px;font-size:13px;color:#333;letter-spacing:0.22px;">Arbeitszeitmodell gilt</span>
<span class="t" style="left:6.00px;top:183.00px;font-size:13px;color:#333;letter-spacing:0.22px;">ab*:</span>
<span class="t" style="left:6.00px;top:212.00px;font-size:13px;color:#333;letter-spacing:0.22px;">Feiertagsmodell*:</span>
<span class="t" style="left:6.00px;top:244.00px;font-size:13px;color:#333;letter-spacing:0.22px;">Feiertagsmodell gültig</span>
<span class="t" style="left:6.00px;top:260.00px;font-size:13px;color:#333;letter-spacing:0.22px;">ab*:</span>
<span class="t" style="left:6.00px;top:289.00px;font-size:13px;color:#333;letter-spacing:0.22px;">Arbeitszeitmodellverlauf:</span>
<span class="t" style="left:6.00px;top:317.00px;font-size:13px;color:#333;letter-spacing:0.22px;">Arbeitszeit lt. Modell automatisch</span>
<span class="t" style="left:6.00px;top:348.00px;font-size:13px;color:#787878;letter-spacing:0.22px;">Aufgabe zum</span>
</div>
<div style="left:1053.00px;top:296.00px;width:367.00px;height:24.00px;background:#fff;border:1px solid #d6d6d6"></div>
<span class="t" style="left:1060.20px;top:303.00px;font-size:12.9px;color:#333;">02.02.2024</span>
<svg style="left:1399.20px;top:299.40px" width="17.2" height="17.2" viewBox="0 0 16 16" ><rect x=".8" y="2.400" width="14.400" height="12.800" rx=".6" fill="none" stroke="#bcbcbc" stroke-width="1.150"/><path d="M.8 5.800h14.400M4.400 .8v3.200M11.600 .8v3.200" stroke="#bcbcbc" stroke-width="1.150"/><path d="M.8 14.300h14.400" stroke="#bcbcbc" stroke-width="1.800"/><rect x="3" y="7.3" width="2.200" height="1.900" rx=".7" fill="none" stroke="#bcbcbc" stroke-width=".85"/><rect x="6.9" y="7.3" width="2.200" height="1.900" rx=".7" fill="none" stroke="#bcbcbc" stroke-width=".85"/><rect x="10.8" y="7.3" width="2.200" height="1.900" rx=".7" fill="none" stroke="#bcbcbc" stroke-width=".85"/><rect x="3" y="10.3" width="2.200" height="1.900" rx=".7" fill="none" stroke="#bcbcbc" stroke-width=".85"/><rect x="6.9" y="10.3" width="2.200" height="1.900" rx=".7" fill="none" stroke="#bcbcbc" stroke-width=".85"/><rect x="10.8" y="10.3" width="2.200" height="1.900" rx=".7" fill="none" stroke="#bcbcbc" stroke-width=".85"/></svg>
<div style="left:1053.00px;top:341.00px;width:367.00px;height:24.00px;background:#fff;border:1px solid #d6d6d6"></div>
<span class="t" style="left:1060.20px;top:348.00px;font-size:12.9px;color:#333;">0</span>
<svg style="left:1403px;top:345px" width="9" height="15" viewBox="0 0 9 15"><path d="M.8 5L4.500 1.300 8.200 5M.8 10l3.700 3.700L8.200 10" fill="none" stroke="#c0c0c0" stroke-width="1"/></svg>
<div style="left:1053.00px;top:386.00px;width:367.00px;height:24.00px;background:#fff;border:1px solid #d6d6d6"></div>
<svg style="left:1399.20px;top:389.40px" width="17.2" height="17.2" viewBox="0 0 16 16" ><rect x=".8" y="2.400" width="14.400" height="12.800" rx=".6" fill="none" stroke="#bcbcbc" stroke-width="1.150"/><path d="M.8 5.800h14.400M4.400 .8v3.200M11.600 .8v3.200" stroke="#bcbcbc" stroke-width="1.150"/><path d="M.8 14.300h14.400" stroke="#bcbcbc" stroke-width="1.800"/><rect x="3" y="7.3" width="2.200" height="1.900" rx=".7" fill="none" stroke="#bcbcbc" stroke-width=".85"/><rect x="6.9" y="7.3" width="2.200" height="1.900" rx=".7" fill="none" stroke="#bcbcbc" stroke-width=".85"/><rect x="10.8" y="7.3" width="2.200" height="1.900" rx=".7" fill="none" stroke="#bcbcbc" stroke-width=".85"/><rect x="3" y="10.3" width="2.200" height="1.900" rx=".7" fill="none" stroke="#bcbcbc" stroke-width=".85"/><rect x="6.9" y="10.3" width="2.200" height="1.900" rx=".7" fill="none" stroke="#bcbcbc" stroke-width=".85"/><rect x="10.8" y="10.3" width="2.200" height="1.900" rx=".7" fill="none" stroke="#bcbcbc" stroke-width=".85"/></svg>
<div style="left:1053.00px;top:451.00px;width:367.00px;height:24.00px;background:#fff;border:1px solid #d6d6d6"></div>
<svg style="left:1399.20px;top:454.40px" width="17.2" height="17.2" viewBox="0 0 16 16" ><rect x=".8" y="2.400" width="14.400" height="12.800" rx=".6" fill="none" stroke="#bcbcbc" stroke-width="1.150"/><path d="M.8 5.800h14.400M4.400 .8v3.200M11.600 .8v3.200" stroke="#bcbcbc" stroke-width="1.150"/><path d="M.8 14.300h14.400" stroke="#bcbcbc" stroke-width="1.800"/><rect x="3" y="7.3" width="2.200" height="1.900" rx=".7" fill="none" stroke="#bcbcbc" stroke-width=".85"/><rect x="6.9" y="7.3" width="2.200" height="1.900" rx=".7" fill="none" stroke="#bcbcbc" stroke-width=".85"/><rect x="10.8" y="7.3" width="2.200" height="1.900" rx=".7" fill="none" stroke="#bcbcbc" stroke-width=".85"/><rect x="3" y="10.3" width="2.200" height="1.900" rx=".7" fill="none" stroke="#bcbcbc" stroke-width=".85"/><rect x="6.9" y="10.3" width="2.200" height="1.900" rx=".7" fill="none" stroke="#bcbcbc" stroke-width=".85"/><rect x="10.8" y="10.3" width="2.200" height="1.900" rx=".7" fill="none" stroke="#bcbcbc" stroke-width=".85"/></svg>
<div style="left:1053.00px;top:496.00px;width:367.00px;height:24.00px;background:#fff;border:1px solid #d6d6d6"></div>
<svg style="left:1402px;top:504.5px" width="11" height="7" viewBox="0 0 11 7"><path d="M.8.8l4.700 4.700L10.200.8" fill="none" stroke="#b8b8b8" stroke-width="1.100"/></svg>
<div style="left:1053.00px;top:528.00px;width:367.00px;height:24.00px;background:#fff;border:1px solid #d6d6d6"></div>
<svg style="left:1399.20px;top:531.40px" width="17.2" height="17.2" viewBox="0 0 16 16" ><rect x=".8" y="2.400" width="14.400" height="12.800" rx=".6" fill="none" stroke="#bcbcbc" stroke-width="1.150"/><path d="M.8 5.800h14.400M4.400 .8v3.200M11.600 .8v3.200" stroke="#bcbcbc" stroke-width="1.150"/><path d="M.8 14.300h14.400" stroke="#bcbcbc" stroke-width="1.800"/><rect x="3" y="7.3" width="2.200" height="1.900" rx=".7" fill="none" stroke="#bcbcbc" stroke-width=".85"/><rect x="6.9" y="7.3" width="2.200" height="1.900" rx=".7" fill="none" stroke="#bcbcbc" stroke-width=".85"/><rect x="10.8" y="7.3" width="2.200" height="1.900" rx=".7" fill="none" stroke="#bcbcbc" stroke-width=".85"/><rect x="3" y="10.3" width="2.200" height="1.900" rx=".7" fill="none" stroke="#bcbcbc" stroke-width=".85"/><rect x="6.9" y="10.3" width="2.200" height="1.900" rx=".7" fill="none" stroke="#bcbcbc" stroke-width=".85"/><rect x="10.8" y="10.3" width="2.200" height="1.900" rx=".7" fill="none" stroke="#bcbcbc" stroke-width=".85"/></svg>
<div style="left:1394.20px;top:602.00px;width:13.00px;height:13.00px;background:#fff;border:1px solid #bdbdbd"></div>
<div style="left:1053.00px;top:632.00px;width:367.00px;height:24.00px;background:#eeeeee;border:1px solid #e0e0e0"></div>
<span class="t" style="left:1060.20px;top:640.00px;font-size:12.9px;color:#b0b0b0;">Bitte auswählen...</span>
<svg style="left:1402.5px;top:640.300px" width="11" height="7" viewBox="0 0 11 7"><path d="M.8.8l4.700 4.700L10.200.8" fill="none" stroke="#c4c4c4" stroke-width="1.250"/></svg>
<div style="left:1053.00px;top:418.00px;width:293.00px;height:24.00px;background:#fff;border:1px solid #5a85cb"></div>
<span class="t" style="left:1060.20px;top:426.00px;font-size:12.9px;color:#333;">40h / Woche</span>
<svg style="left:1328.5px;top:426.500px" width="11" height="7" viewBox="0 0 11 7"><path d="M.8.800l4.700 4.700L10.200.800" fill="none" stroke="#b8b8b8" stroke-width="1.100"/></svg>
<svg style="left:1375.00px;top:419.80px" width="16" height="16" viewBox="0 0 16 16" ><rect x="1.200" y="4.200" width="13.600" height="10.800" rx="1.200" fill="none" stroke="#7b564a" stroke-width="1.100"/><path d="M5.600 4.200V2.200h4.800v2" fill="#c9aaa0" stroke="#7b564a" stroke-width="1"/><path d="M1.200 7.400h13.600M4.200 7.400V15M11.800 7.400V15" stroke="#7b564a" stroke-width="1"/></svg>
<div style="left:1053.00px;top:442.00px;width:293.00px;height:185.00px;background:#fff;box-shadow:0 2px 6px rgba(0,0,0,.28);border-left:1px solid #e4e4e4"></div>
<div style="left:1054.00px;top:509.30px;width:292.00px;height:29.30px;background:#e4eaf5"></div>
<svg style="left:1059.70px;top:446.50px" width="16.4" height="16.4" viewBox="0 0 16 16" ><circle cx="8" cy="8" r="7.100" fill="#fff" stroke="#5b9ad9" stroke-width="1"/><path d="M8 7v4.600" stroke="#5b9ad9" stroke-width="1.200"/><circle cx="8" cy="4.600" r=".8" fill="#5b9ad9"/></svg>
<svg style="left:1083.10px;top:454.10px" width="16.4" height="16.4" viewBox="0 0 16 16" ><circle cx="8" cy="8" r="7.100" fill="#fff" stroke="#5b9ad9" stroke-width="1"/><path d="M8 7v4.600" stroke="#5b9ad9" stroke-width="1.200"/><circle cx="8" cy="4.600" r=".8" fill="#5b9ad9"/></svg>
<span class="t" style="left:1104.80px;top:460.00px;font-size:12.9px;color:#333;">30h / Woche</span>
<svg style="left:1059.70px;top:483.60px" width="16.4" height="16.4" viewBox="0 0 16 16" ><circle cx="8" cy="8" r="7.100" fill="#fff" stroke="#5b9ad9" stroke-width="1"/><path d="M8 7v4.600" stroke="#5b9ad9" stroke-width="1.200"/><circle cx="8" cy="4.600" r=".8" fill="#5b9ad9"/></svg>
<span class="t" style="left:1080.80px;top:490.00px;font-size:12.9px;color:#333;">4-Tage-Woche - keine Sollstunden</span>
<svg style="left:1059.70px;top:512.90px" width="16.4" height="16.4" viewBox="0 0 16 16" ><circle cx="8" cy="8" r="7.100" fill="#fff" stroke="#5b9ad9" stroke-width="1"/><path d="M8 7v4.600" stroke="#5b9ad9" stroke-width="1.200"/><circle cx="8" cy="4.600" r=".8" fill="#5b9ad9"/></svg>
<span class="t" style="left:1080.80px;top:519.00px;font-size:12.9px;color:#333;">40h / Woche</span>
<svg style="left:1059.70px;top:542.10px" width="16.4" height="16.4" viewBox="0 0 16 16" ><circle cx="8" cy="8" r="7.100" fill="#fff" stroke="#5b9ad9" stroke-width="1"/><path d="M8 7v4.600" stroke="#5b9ad9" stroke-width="1.200"/><circle cx="8" cy="4.600" r=".8" fill="#5b9ad9"/></svg>
<span class="t" style="left:1080.80px;top:548.00px;font-size:12.9px;color:#333;">40h Woche mit Nachtzuschlägen</span>
<svg style="left:1059.70px;top:571.50px" width="16.4" height="16.4" viewBox="0 0 16 16" ><circle cx="8" cy="8" r="7.100" fill="#fff" stroke="#5b9ad9" stroke-width="1"/><path d="M8 7v4.600" stroke="#5b9ad9" stroke-width="1.200"/><circle cx="8" cy="4.600" r=".8" fill="#5b9ad9"/></svg>
<span class="t" style="left:1080.80px;top:577.00px;font-size:12.9px;color:#333;">Beispiel</span>
<svg style="left:1059.70px;top:600.80px" width="16.4" height="16.4" viewBox="0 0 16 16" ><circle cx="8" cy="8" r="7.100" fill="#fff" stroke="#5b9ad9" stroke-width="1"/><path d="M8 7v4.600" stroke="#5b9ad9" stroke-width="1.200"/><circle cx="8" cy="4.600" r=".8" fill="#5b9ad9"/></svg>
<span class="t" style="left:1080.80px;top:607.00px;font-size:12.9px;color:#333;">Minijob</span>
<svg style="left:1318.200px;top:527.500px" width="13" height="19" viewBox="0 0 13 19"><path d="M1 1v14.200l3.300-3.100 2.300 5.500 2.300-1-2.300-5.300h4.600z" fill="#000" stroke="#fff" stroke-width="1.100" stroke-linejoin="round"/></svg>
</div></div>
</body>
</html>
